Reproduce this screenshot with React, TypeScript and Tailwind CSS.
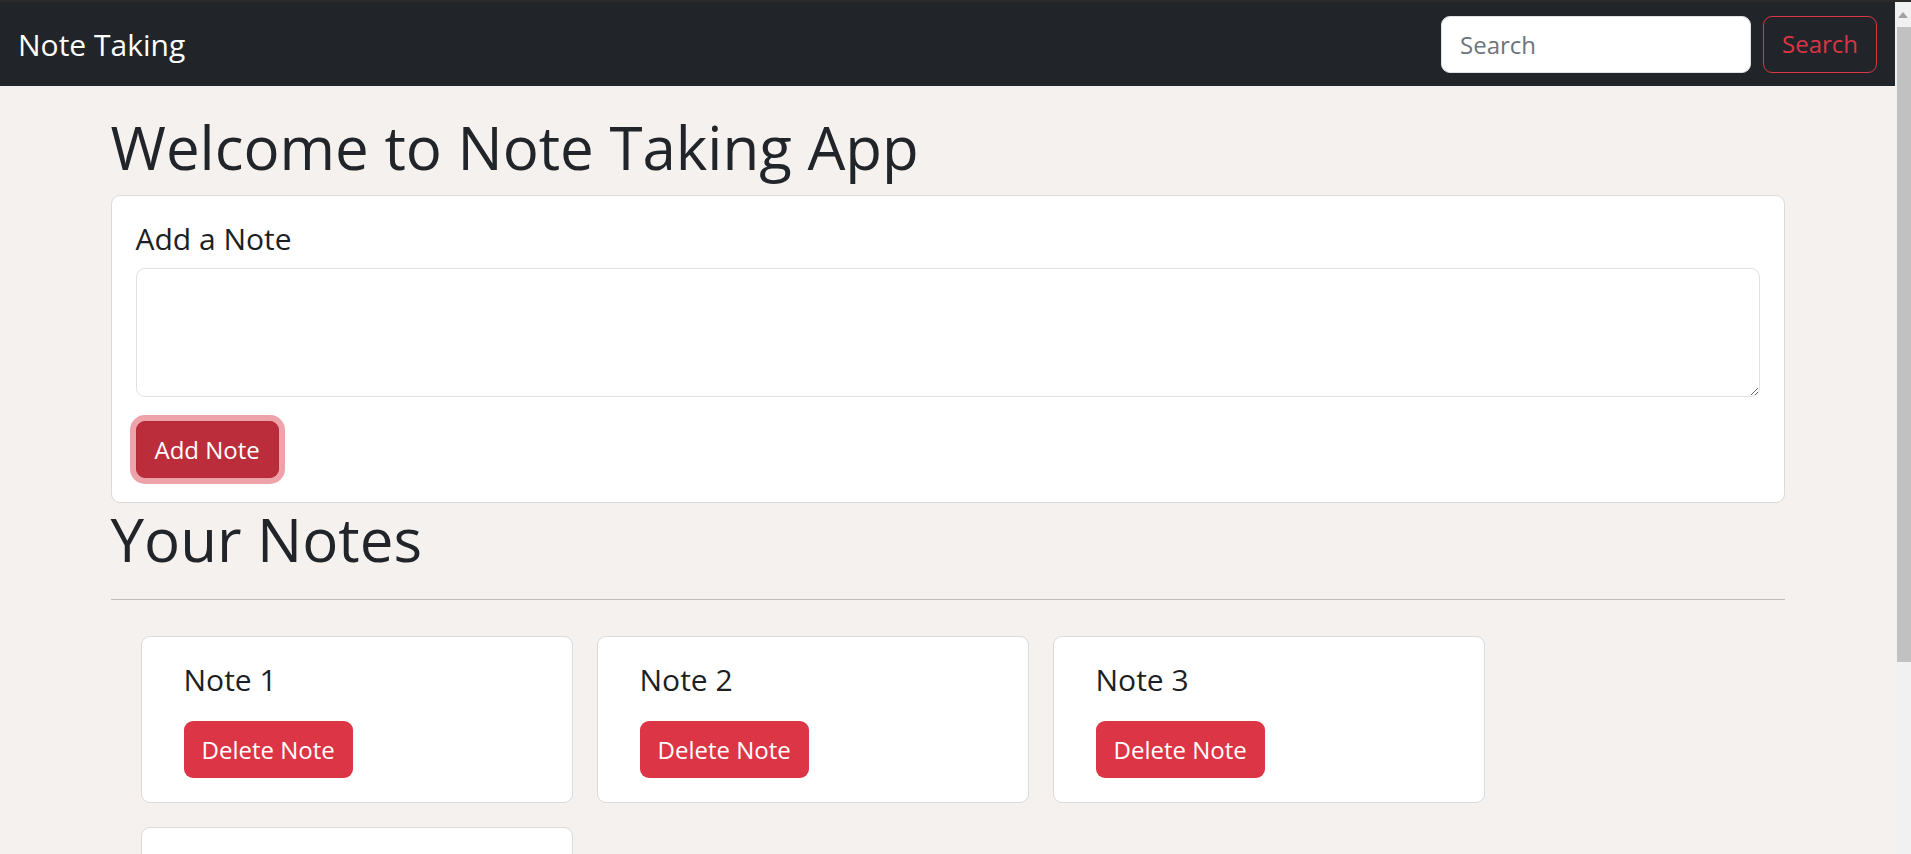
const NOTES = ["Note 1", "Note 2", "Note 3", "Note 4"];

function Navbar() {
  return (
    <nav className="flex items-center justify-between bg-[#212529] px-[18px] py-3">
      <span className="py-[7.5px] text-[30px] leading-[45px] text-white">Note Taking</span>
      <form className="flex items-center" onSubmit={(e) => e.preventDefault()}>
        <input
          type="search"
          placeholder="Search"
          className="mr-3 h-[57px] w-[310px] rounded-[9px] border border-[#dee2e6] bg-white px-[18px] text-[24px] leading-9 text-[#212529] outline-none placeholder:text-[#6c757d]"
        />
        <button className="h-[57px] rounded-[9px] border border-[#dc3545] px-[18px] text-[24px] leading-9 text-[#dc3545]">
          Search
        </button>
      </form>
    </nav>
  );
}

function AddNote() {
  return (
    <div className="rounded-[9px] border border-[#dcdad8] bg-white p-6">
      <h5 className="mb-3 pt-[2px] text-[30px] font-medium leading-[34px] text-[#1c1f23]">Add a Note</h5>
      <textarea className="mb-6 block h-[129px] w-full rounded-[9px] border border-[#dee2e6] px-[18px] py-[9px] text-[24px] leading-9 outline-none" />
      <button className="h-[57px] rounded-[9px] border border-[#b02a37] bg-[#bb2d3b] px-[18px] text-[24px] leading-9 text-white ring-[6px] ring-[#eea2aa]">
        Add Note
      </button>
    </div>
  );
}

function NoteCard({ title }: { title: string }) {
  return (
    <div className="m-3 w-[432px] rounded-[9px] border border-[#dcdad8] bg-white py-6 pl-[42px] pr-6">
      <h5 className="mb-6 pt-[2px] text-[30px] font-medium leading-[34px] text-[#1c1f23]">{title}</h5>
      <button className="h-[57px] rounded-[9px] bg-[#dc3545] px-[18px] text-[24px] leading-9 text-white">
        Delete Note
      </button>
    </div>
  );
}

// fake window scrollbar, as in the screenshot
function Scrollbar() {
  return (
    <div className="flex w-4 shrink-0 flex-col bg-[#f1f1f1]">
      <div className="flex h-[25px] items-center justify-center">
        <svg width="10" height="6" viewBox="0 0 10 6">
          <path d="M5 0 L10 6 L0 6 Z" fill="#a3a3a3" />
        </svg>
      </div>
      <div className="ml-[2px] h-[635px] bg-[#c1c1c1]" />
    </div>
  );
}

export default function App() {
  return (
    <div className="flex h-[854px] flex-col overflow-hidden bg-[#f4f1ee] text-[#212529] [font-family:'Open_Sans',sans-serif]">
      <div className="h-[2px] shrink-0 bg-[#2b2b2b]" />
      <div className="flex min-h-0 flex-1">
        <div className="min-w-0 flex-1 overflow-hidden">
          <Navbar />
          <main className="mx-auto mt-[25px] w-[1710px] px-[18px]">
            <h1 className="mb-3 text-[60px] font-medium leading-[72px]">Welcome to Note Taking App</h1>
            <AddNote />
            <h1 className="text-[60px] font-medium leading-[72px]">Your Notes</h1>
            <hr className="my-6 border-t-[1.5px] border-[#bfbdbb]" />
            <div className="flex flex-wrap px-[18px]">
              {NOTES.map((n) => (
                <NoteCard key={n} title={n} />
              ))}
            </div>
          </main>
        </div>
        <Scrollbar />
      </div>
    </div>
  );
}
